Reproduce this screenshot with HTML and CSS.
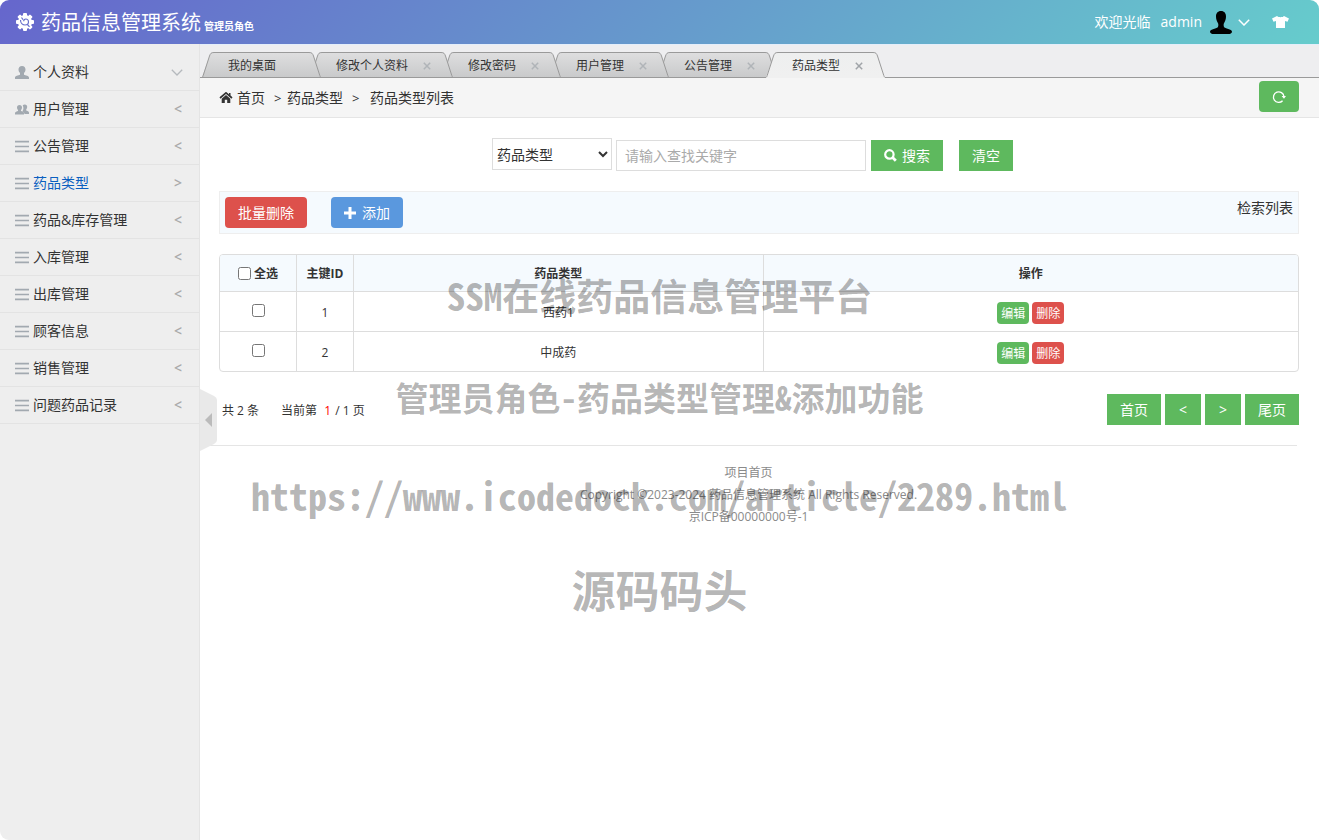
FILE: index.html
```html
<!DOCTYPE html>
<html lang="zh-CN">
<head>
<meta charset="utf-8">
<title>药品信息管理系统</title>
<link rel="stylesheet" href="styles.css">
</head>
<body>
<svg class="defs" aria-hidden="true">
  <symbol id="i-list" viewBox="0 0 13 12"><path d="M0 1.500h13M0 6h13M0 10.500h13" stroke="currentColor" stroke-width="1.500" fill="none"/></symbol>
  <symbol id="i-user" viewBox="0 0 14 13"><path d="M7 0c2.300 0 3.500 1.500 3.500 3.600 0 1.500-.6 2.600-1.500 3.500v1.600c1.500.5 5 1 5 2.800V13H0v-1.500c0-1.800 3.500-2.300 5-2.800V7.100C4.100 6.200 3.500 5.100 3.500 3.600 3.500 1.500 4.700 0 7 0z" fill="currentColor"/></symbol>
  <symbol id="i-close" viewBox="0 0 8 8"><path d="M.8.8l6.400 6.400M7.200.8L.8 7.200" stroke="currentColor" stroke-width="1.500" fill="none"/></symbol>
  <symbol id="i-left" viewBox="0 0 12 26"><path class="edge-fill" d="M0 25L7.500 4C8.500 1.500 9 .5 12 .5V25z"/><path class="edge-base" d="M0 25h12v1H0z"/><path class="edge-line" d="M-.5 25.500C.5 25.500.8 24.500 1.200 23.500L7.500 4C8.500 1.500 9 .5 12 .5"/></symbol>
  <symbol id="i-right" viewBox="0 0 12 26"><path class="edge-fill" d="M12 25L4.500 4C3.500 1.500 3 .5 0 .5V25z"/><path class="edge-base" d="M0 25h12v1H0z"/><path class="edge-line" d="M12.500 25.500C11.500 25.500 11.200 24.500 10.800 23.500L4.500 4C3.500 1.500 3 .5 0 .5"/></symbol>
  <linearGradient id="tab-grad" x1="0" y1="0" x2="0" y2="1"><stop offset="0" stop-color="#dededf"/><stop offset="1" stop-color="#c9cacb"/></linearGradient>
  <linearGradient id="tab-grad-on" x1="0" y1="0" x2="0" y2="1"><stop offset="0" stop-color="#eeefef"/><stop offset="1" stop-color="#f0f0f0"/></linearGradient>
</svg>
<div class="app">
  <header class="header">
    <svg class="logo" viewBox="0 0 20 20"><g fill="#fff"><circle cx="10" cy="10" r="7"/><g id="teeth"><rect x="8" y="1" width="4" height="18" rx="1"/><rect x="1" y="8" width="18" height="4" rx="1"/></g><use href="#teeth" transform="rotate(45 10 10)"/></g><path d="M6.500 5.500l1.500 2.200M5.500 8c0 3 2 5 4.500 5 2 0 3.500-1.400 3.500-3.200 0-1.600-1.200-2.800-2.600-2.800-1.300 0-2.200 1-2.200 2.200M12.500 12.500l2 2.300" stroke="#6871cc" stroke-width="1.200" fill="none"/></svg>
    <h1 class="brand">药品信息管理系统</h1>
    <span class="role">管理员角色</span>
    <div class="account">
      <span>欢迎光临</span>
      <a class="account-name" href="#">admin
        <svg class="avatar" viewBox="0 0 22 23"><path d="M11 0c3.400 0 5 2.400 5 5.500 0 3-1 5-1.900 6.600-.5 1-.7 2.500-.1 3.900.7 1.500 8 2 8 4.700 0 1.500-2 2.300-3.500 2.300h-15C2 23 0 22.200 0 20.700 0 18 7.300 17.500 8 16c.6-1.400.4-2.900-.1-3.900C7 10.500 6 8.500 6 5.500 6 2.400 7.600 0 11 0z"/></svg>
        <svg class="caret" viewBox="0 0 12 7"><path d="M.8.800L6 6l5.200-5.200" stroke="#fff" stroke-width="1.500" fill="none"/></svg>
      </a>
      <button class="skin" aria-label="换肤"><svg viewBox="0 0 17 12"><path d="M5 0c1.500 1.600 5.500 1.600 7 0l5 2.500-1.500 3.200L13 5v7H4V5L1.500 5.700 0 2.500z" fill="#fff"/></svg></button>
    </div>
  </header>
  <div class="body">
    <nav class="sidebar">
      <a class="item" href="#"><svg class="ico"><use href="#i-user"/></svg><span class="name">个人资料</span><svg class="open" viewBox="0 0 12 7"><path d="M.8.800L6 6l5.200-5.200" stroke="currentColor" stroke-width="1.300" fill="none"/></svg></a>
      <a class="item" href="#"><svg class="ico" viewBox="0 0 14 12"><path d="M9.800 1c1.600 0 2.400 1 2.400 2.500 0 1-.4 1.800-1 2.400v1c1 .4 2.800.7 2.800 2V10.500H9.500C9.300 9 8.300 8.300 7.200 7.900c.9-1 1.200-2.100 1.200-3.400 0-1-.2-1.900-.7-2.600C8.200 1.300 8.900 1 9.800 1z" fill="currentColor"/><path d="M4.500 1.500c1.600 0 2.500 1.100 2.500 2.600 0 1-.4 1.900-1 2.500v1c1 .4 3 .8 3 2.200V11H0V9.800c0-1.400 2-1.800 3-2.200v-1C2.400 6 2 5.100 2 4.100 2 2.600 2.900 1.500 4.500 1.500z" fill="currentColor"/></svg><span class="name">用户管理</span><span class="arrow">&lt;</span></a>
      <a class="item" href="#"><svg class="ico"><use href="#i-list"/></svg><span class="name">公告管理</span><span class="arrow">&lt;</span></a>
      <a class="item current" href="#"><svg class="ico"><use href="#i-list"/></svg><span class="name">药品类型</span><span class="arrow">&gt;</span></a>
      <a class="item" href="#"><svg class="ico"><use href="#i-list"/></svg><span class="name">药品&amp;库存管理</span><span class="arrow">&lt;</span></a>
      <a class="item" href="#"><svg class="ico"><use href="#i-list"/></svg><span class="name">入库管理</span><span class="arrow">&lt;</span></a>
      <a class="item" href="#"><svg class="ico"><use href="#i-list"/></svg><span class="name">出库管理</span><span class="arrow">&lt;</span></a>
      <a class="item" href="#"><svg class="ico"><use href="#i-list"/></svg><span class="name">顾客信息</span><span class="arrow">&lt;</span></a>
      <a class="item" href="#"><svg class="ico"><use href="#i-list"/></svg><span class="name">销售管理</span><span class="arrow">&lt;</span></a>
      <a class="item" href="#"><svg class="ico"><use href="#i-list"/></svg><span class="name">问题药品记录</span><span class="arrow">&lt;</span></a>
    </nav>
    <main class="main">
      <button class="handle" aria-label="收起菜单"><svg viewBox="0 0 17 62"><path d="M0 0l14 7q3 1.500 3 4v40q0 2.500-3 4L0 62z" fill="#e9e9e9"/><path d="M5 31l7-7v14z" fill="#bbb"/></svg></button>
      <div class="tabs">
        <div class="tab t1"><svg class="edge"><use href="#i-left"/></svg><span class="label">我的桌面</span><svg class="edge"><use href="#i-right"/></svg></div>
        <div class="tab t2"><svg class="edge"><use href="#i-left"/></svg><span class="label">修改个人资料<svg class="x"><use href="#i-close"/></svg></span><svg class="edge"><use href="#i-right"/></svg></div>
        <div class="tab t3"><svg class="edge"><use href="#i-left"/></svg><span class="label">修改密码<svg class="x"><use href="#i-close"/></svg></span><svg class="edge"><use href="#i-right"/></svg></div>
        <div class="tab t4"><svg class="edge"><use href="#i-left"/></svg><span class="label">用户管理<svg class="x"><use href="#i-close"/></svg></span><svg class="edge"><use href="#i-right"/></svg></div>
        <div class="tab t5"><svg class="edge"><use href="#i-left"/></svg><span class="label">公告管理<svg class="x"><use href="#i-close"/></svg></span><svg class="edge"><use href="#i-right"/></svg></div>
        <div class="tab on"><svg class="edge"><use href="#i-left"/></svg><span class="label">药品类型<svg class="x"><use href="#i-close"/></svg></span><svg class="edge"><use href="#i-right"/></svg></div>
      </div>
      <div class="crumbs">
        <svg class="home" viewBox="0 0 13 11"><path d="M.5 6L6.500.9l6 5.100" stroke="#333" stroke-width="1.700" fill="none"/><path d="M2.200 6.700L6.500 3.100l4.300 3.600V11H7.700V7.800H5.300V11H2.200z" fill="#333"/><path d="M9.500 1h1.500v3L9.500 2.800z" fill="#333"/></svg>
        <a href="#">首页</a><span class="sep">&gt;</span><a href="#">药品类型</a><span class="sep wide">&gt;</span><span>药品类型列表</span>
        <button class="btn green round refresh" aria-label="刷新"><svg viewBox="0 0 14 14"><path d="M10.600 10.800A5.300 5.300 0 1 1 12 6.500" stroke="#fff" stroke-width="1.300" fill="none"/><path d="M9.600 6h4.400l-2 2.800z" fill="#fff"/></svg></button>
      </div>
      <div class="content">
        <form class="search">
          <select class="field" aria-label="查询字段"><option>药品类型</option></select>
          <input class="keyword" type="text" placeholder="请输入查找关键字" aria-label="关键字">
          <button type="button" class="btn green"><svg class="lens" viewBox="0 0 13 13"><circle cx="5.400" cy="5.400" r="4.200" stroke="#fff" stroke-width="2.200" fill="none"/><path d="M8.300 8.300l3.500 3.500" stroke="#fff" stroke-width="2.800"/></svg>搜索</button>
          <button type="button" class="btn green clear">清空</button>
        </form>
        <div class="toolbar">
          <button class="btn red round">批量删除</button>
          <button class="btn blue round"><svg class="plus" viewBox="0 0 12 12"><path d="M6 0v12M0 6h12" stroke="#fff" stroke-width="3"/></svg>添加</button>
          <span class="note">检索列表</span>
        </div>
        <table class="grid">
          <colgroup><col class="c1"><col class="c2"><col class="c3"><col></colgroup>
          <thead><tr><th><label class="all"><input type="checkbox">全选</label></th><th>主键ID</th><th>药品类型</th><th>操作</th></tr></thead>
          <tbody>
            <tr><td><input type="checkbox" aria-label="选择 1"></td><td>1</td><td>西药1</td><td><div class="ops"><button class="mini green">编辑</button><button class="mini red">删除</button></div></td></tr>
            <tr><td><input type="checkbox" aria-label="选择 2"></td><td>2</td><td>中成药</td><td><div class="ops"><button class="mini green">编辑</button><button class="mini red">删除</button></div></td></tr>
          </tbody>
        </table>
        <div class="pager">
          <span>共 2 条</span><span class="page">当前第 <b>1</b> / 1 页</span>
          <div class="pages"><button class="btn green">首页</button><button class="btn green">&lt;</button><button class="btn green">&gt;</button><button class="btn green">尾页</button></div>
        </div>
      </div>
      <footer class="footer">
        <a href="#">项目首页</a>
        <p>Copyright ©2023-2024 药品信息管理系统 All Rights Reserved.</p>
        <p>京ICP备00000000号-1</p>
      </footer>
    </main>
  </div>
  <div class="watermark">
    <p class="w1">SSM在线药品信息管理平台</p>
    <p class="w2">管理员角色-药品类型管理&amp;添加功能</p>
    <p class="w3">https://www.icodedock.com/article/2289.html</p>
    <p class="w4">源码码头</p>
  </div>
</div>
</body>
</html>
```
FILE: styles.css
```css
* { box-sizing: border-box; }
body {
  margin: 0;
  color: #333;
  background: #fff;
  font: 14px/20px "Open Sans", "Noto Sans CJK SC", sans-serif;
}
a { color: inherit; text-decoration: none; }
p, h1 { margin: 0; }
svg { display: block; flex: none; }
button, input, select { font: inherit; margin: 0; }
button { border: 0; cursor: pointer; }
.defs { position: absolute; width: 0; height: 0; }

.app {
  position: relative;
  display: flex;
  flex-direction: column;
  min-height: 100vh;
  border-radius: 9px;
  overflow: hidden;
}

.header {
  display: flex;
  align-items: center;
  height: 44px;
  padding: 0 30px 0 15px;
  color: #fff;
  background: linear-gradient(135deg, #66c, #6cc);
}
.logo { width: 20px; height: 20px; margin-right: 6px; }
.brand { padding-top: 2px; font-size: 20px; line-height: 42px; font-weight: 400; }
.role { margin: 8px 0 0 3px; font-size: 10px; line-height: 16px; font-weight: 700; }
.account { display: flex; align-items: center; margin-left: auto; }
.account-name { display: flex; align-items: center; margin-left: 10px; }
.avatar { width: 22px; height: 23px; margin-left: 8px; }
.caret { width: 12px; height: 7px; margin-left: 6px; }
.skin { margin-left: 22px; padding: 0; background: none; }
.skin svg { width: 17px; height: 12px; }

.body { display: flex; flex: 1; }
.sidebar {
  flex: none;
  width: 200px;
  padding-top: 10px;
  background: #eee;
  border-right: 1px solid #e4e4e4;
}
.item {
  display: flex;
  align-items: center;
  height: 37px;
  padding: 0 15px;
  border-bottom: 1px solid #e3e3e3;
}
.ico { width: 14px; height: 13px; margin-right: 4px; color: #a2a9b0; }
.name { flex: 1; }
.arrow { width: 10px; color: #aaa; font-weight: 600; }
.open { width: 12px; height: 7px; margin-right: 1px; color: #b5b9bd; }
.current .name { color: #0a5fc0; }

.main { position: relative; flex: 1; min-width: 0; background: #fff; }
.handle {
  position: absolute;
  left: 0;
  top: 345px;
  padding: 0;
  background: none;
}
.handle svg { width: 17px; height: 62px; }

.tabs {
  display: flex;
  align-items: flex-end;
  height: 34px;
  padding-left: 2px;
  background: linear-gradient(#9a9a9a, #9a9a9a) bottom / 100% 1px no-repeat, #eeeef0;
  border-top: 1px solid #e4eefa;
}
.tab { position: relative; display: flex; height: 26px; margin-right: -11px; font-size: 12px; }
.t1 { z-index: 5; }
.t2 { z-index: 4; }
.t3 { z-index: 3; }
.t4 { z-index: 2; }
.t5 { z-index: 1; }
.on { z-index: 6; }
.edge { width: 12px; height: 26px; fill: url(#tab-grad); }
.edge-base { fill: var(--tab-base, #9a9a9a); }
.edge-line { fill: none; stroke: #9a9a9a; }
.label {
  display: flex;
  align-items: center;
  padding: 2px 33px 0 14px;
  background: linear-gradient(#dededf, #c9cacb);
  border-top: 1px solid #9a9a9a;
  border-bottom: 1px solid #9a9a9a;
}
.x { width: 8px; height: 8px; margin: 0 -23px 0 15px; color: #b0b4b8; }
.on { --tab-base: #f0f0f0; }
.on .edge { fill: url(#tab-grad-on); }
.on .label { background: linear-gradient(#eeefef, #f0f0f0); border-bottom-color: #f0f0f0; }
.on .x { color: #a0a4a8; }

.crumbs {
  display: flex;
  align-items: center;
  height: 40px;
  padding: 0 20px 0 19px;
  background: #f5f5f5;
  border-bottom: 1px solid #e5e5e5;
}
.home { width: 14px; height: 11px; margin-right: 4px; }
.sep { width: 13px; margin-left: 9px; font-size: 13px; }
.sep.wide { width: 18px; }
.refresh { margin: -2px 0 0 auto; width: 40px; }
.refresh svg { width: 14px; height: 14px; }

.btn {
  display: flex;
  align-items: center;
  justify-content: center;
  min-width: 36px;
  height: 31px;
  padding: 0 13px;
  color: #fff;
}
.round { border-radius: 4px; }
.green { background: #5eb95e; }
.red { background: #dd514c; }
.blue { background: #5a98de; }

.content { padding: 20px 20px 20px 19px; }
.search { display: flex; justify-content: center; align-items: flex-end; padding-right: 13px; margin-bottom: 20px; }
.field {
  width: 120px;
  height: 32px;
  margin-bottom: 1px;
  padding: 0;
  color: #333;
  background: #fff;
  border: 1px solid #ddd;
}
.keyword { width: 250px; height: 31px; margin: 0 5px 0 4px; padding: 0 8px; border: 1px solid #ddd; outline: 0; }
.keyword::placeholder { color: #aaa; }
.lens { width: 13px; height: 13px; margin-right: 5px; }
.clear { margin-left: 16px; }

.toolbar {
  display: flex;
  align-items: flex-start;
  gap: 24px;
  padding: 5px;
  background: #f5fafe;
  border: 1px solid #eee;
}
.plus { width: 12px; height: 12px; margin-right: 6px; }
.note { margin: 1px 0 0 auto; }

.grid {
  width: 100%;
  margin-top: 20px;
  border-collapse: separate;
  border-spacing: 0;
  table-layout: fixed;
  border: 1px solid #ddd;
  border-radius: 4px;
  overflow: hidden;
  font-size: 12px;
  text-align: center;
}
.c1 { width: 76px; }
.c2 { width: 57px; }
.c3 { width: 38%; }
.grid th, .grid td { padding: 2px 0 0; border-left: 1px solid #ddd; }
.grid th:first-child, .grid td:first-child { border-left: 0; }
.grid th { height: 36px; background: #f5fafe; }
.grid td { height: 40px; border-top: 1px solid #ddd; }
.grid input { width: 13px; height: 13px; }
.grid td input { vertical-align: middle; }
.grid td:first-child { padding: 0 0 4px; }
.all { display: flex; align-items: center; justify-content: center; }
.all input { margin: 0 3px 2px 0; }
.ops { display: flex; justify-content: center; gap: 3px; }
.mini { height: 22px; padding: 1px 4px 0; border-radius: 4px; color: #fff; line-height: 22px; }

.pager { display: flex; align-items: center; margin-top: 22px; padding-left: 3px; font-size: 12px; }
.pager span { padding-top: 2px; }
.page { margin-left: 22px; }
.page b { margin: 0 1px 0 4px; color: #f00; font-weight: 400; }
.pages { display: flex; gap: 4px; margin-left: auto; font-size: 14px; }

.footer {
  margin-right: 22px;
  padding-top: 16px;
  border-top: 1px solid #e5e5e5;
  color: #8a8a8a;
  font-size: 12px;
  line-height: 22px;
  text-align: center;
}

.watermark {
  position: absolute;
  inset: 268px 0 auto;
  z-index: 10;
  color: rgba(0, 0, 0, 0.3);
  font-family: "Noto Sans Mono CJK SC", "Noto Sans CJK SC", sans-serif;
  font-weight: 700;
  text-align: center;
  white-space: nowrap;
  pointer-events: none;
}
.w1 { font-size: 37px; line-height: 54px; }
.w2 { margin-top: 48px; font-size: 33px; line-height: 54px; }
.w3 { margin-top: 44px; font-size: 38px; line-height: 54px; }
.w4 { margin-top: 40px; font-size: 44px; line-height: 54px; }
```
